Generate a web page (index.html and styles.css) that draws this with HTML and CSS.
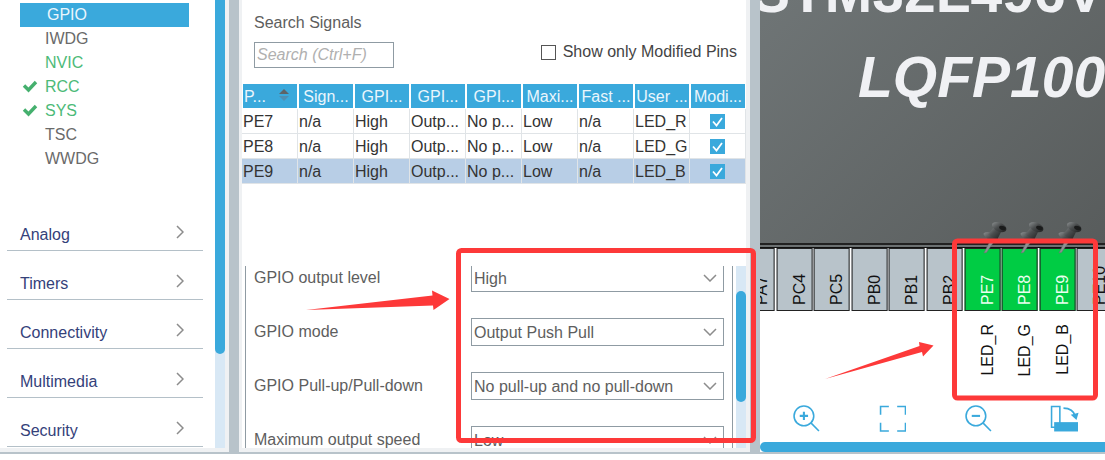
FILE: index.html
```
<!DOCTYPE html>
<html lang="en">
<head>
  <meta charset="UTF-8">
  <meta name="viewport" content="width=device-width, initial-scale=1.0">
  <title>Pinout &amp; Configuration</title>
  <link rel="stylesheet" href="styles.css">
</head>
<body>
  <!-- Shared icons -->
  <svg class="defs" width="0" height="0" aria-hidden="true">
    <linearGradient id="metal" x1="0" y1="0" x2="1" y2="1">
      <stop offset="0" stop-color="#8b8f90"/>
      <stop offset=".45" stop-color="#4a4d4e"/>
      <stop offset="1" stop-color="#1e2020"/>
    </linearGradient>
    <symbol id="check" viewBox="0 0 16 14">
      <path d="M2 6.5l4.5 4.5L14 3" fill="none" stroke="#45b06e" stroke-width="3.4"/>
    </symbol>
    <symbol id="chevron" viewBox="0 0 8 14">
      <path d="M1 1l6 6-6 6" fill="none" stroke="#8c8c8c" stroke-width="1.5"/>
    </symbol>
    <symbol id="pushpin" viewBox="0 0 24 34">
      <path d="M7 20L1 32l2.500-.5L10 22z" fill="#8d9192" stroke="#6a6e6f" stroke-width=".5"/>
      <path d="M1 12c3-2 7-1 10 1.500s6 5.500 5 8.500c-3 1-8-.5-11-3.500S-.5 13.500 1 12z" fill="url(#metal)"/>
      <path d="M5 13.500l6-7.500 7 5-4 8z" fill="url(#metal)"/>
      <path d="M10 2c3-2 8-.5 11 2s3 5 1 6.500c-3 1.500-7 .5-10-2S8 3.500 10 2z" fill="url(#metal)"/>
      <ellipse cx="19.500" cy="7" rx="3.500" ry="2" transform="rotate(20 19.500 7)" fill="#1a1b1b"/>
    </symbol>
  </svg>

  <div class="workspace">
    <nav class="panel sidebar">
      <div class="sidebar-content">
        <ul class="peripherals">
          <li><a class="peripheral selected" href="#">GPIO</a></li>
          <li><a class="peripheral" href="#">IWDG</a></li>
          <li><a class="peripheral active" href="#">NVIC</a></li>
          <li><a class="peripheral active" href="#"><svg class="check"><use href="#check"/></svg>RCC</a></li>
          <li><a class="peripheral active" href="#"><svg class="check"><use href="#check"/></svg>SYS</a></li>
          <li><a class="peripheral" href="#">TSC</a></li>
          <li><a class="peripheral" href="#">WWDG</a></li>
        </ul>
        <div class="categories">
          <button class="category">Analog <svg class="chevron"><use href="#chevron"/></svg></button>
          <button class="category">Timers <svg class="chevron"><use href="#chevron"/></svg></button>
          <button class="category">Connectivity <svg class="chevron"><use href="#chevron"/></svg></button>
          <button class="category">Multimedia <svg class="chevron"><use href="#chevron"/></svg></button>
          <button class="category">Security <svg class="chevron"><use href="#chevron"/></svg></button>
        </div>
      </div>
      <div class="scrollbar"><div class="thumb thumb-sidebar"></div></div>
    </nav>

    <main class="panel config">
      <div class="search">
        <div class="search-field">
          <label for="search">Search Signals</label>
          <input type="text" id="search" placeholder="Search (Ctrl+F)">
        </div>
        <label class="modified-only"><input type="checkbox" class="box"> Show only Modified Pins</label>
      </div>

      <table class="pins-table">
        <thead>
          <tr>
            <th class="sorted">P...
              <svg class="sort" viewBox="0 0 10 14"><path d="M0 6l5-5 5 5z" fill="#5d6468"/><path d="M0 8l5 5 5-5z" fill="#4f8fb3"/></svg>
            </th>
            <th>Sign...</th>
            <th>GPI...</th>
            <th>GPI...</th>
            <th>GPI...</th>
            <th>Maxi...</th>
            <th>Fast ...</th>
            <th>User ...</th>
            <th>Modi...</th>
          </tr>
        </thead>
        <tbody>
          <tr>
            <td>PE7</td><td>n/a</td><td>High</td><td>Outp...</td><td>No p...</td><td>Low</td><td>n/a</td><td>LED_R</td>
            <td class="mod"><input type="checkbox" class="box" aria-label="PE7 modified" checked></td>
          </tr>
          <tr>
            <td>PE8</td><td>n/a</td><td>High</td><td>Outp...</td><td>No p...</td><td>Low</td><td>n/a</td><td>LED_G</td>
            <td class="mod"><input type="checkbox" class="box" aria-label="PE8 modified" checked></td>
          </tr>
          <tr class="current">
            <td>PE9</td><td>n/a</td><td>High</td><td>Outp...</td><td>No p...</td><td>Low</td><td>n/a</td><td>LED_B</td>
            <td class="mod"><input type="checkbox" class="box" aria-label="PE9 modified" checked></td>
          </tr>
        </tbody>
      </table>

      <div class="settings">
        <form class="fields">
          <div class="field">
            <label for="level">GPIO output level</label>
            <select id="level"><option>High</option><option>Low</option></select>
          </div>
          <div class="field">
            <label for="mode">GPIO mode</label>
            <select id="mode"><option>Output Push Pull</option><option>Output Open Drain</option></select>
          </div>
          <div class="field">
            <label for="pull">GPIO Pull-up/Pull-down</label>
            <select id="pull"><option>No pull-up and no pull-down</option><option>Pull-up</option><option>Pull-down</option></select>
          </div>
          <div class="field">
            <label for="speed">Maximum output speed</label>
            <select id="speed"><option>Low</option><option>Medium</option><option>High</option></select>
          </div>
        </form>
        <div class="scrollbar"><div class="thumb thumb-settings"></div></div>
      </div>
    </main>

    <section class="pinout">
      <div class="chip">
        <div class="part">STM32L496V</div>
        <div class="package">LQFP100</div>
      </div>
      <div class="pins">
        <div class="pin"><span class="pad">PA7</span></div>
        <div class="pin"><span class="pad">PC4</span></div>
        <div class="pin"><span class="pad">PC5</span></div>
        <div class="pin"><span class="pad">PB0</span></div>
        <div class="pin"><span class="pad">PB1</span></div>
        <div class="pin"><span class="pad">PB2</span></div>
        <div class="pin"><span class="pad assigned">PE7</span><span class="signal">LED_R</span><svg class="pushpin"><use href="#pushpin"/></svg></div>
        <div class="pin"><span class="pad assigned">PE8</span><span class="signal">LED_G</span><svg class="pushpin"><use href="#pushpin"/></svg></div>
        <div class="pin"><span class="pad assigned">PE9</span><span class="signal">LED_B</span><svg class="pushpin"><use href="#pushpin"/></svg></div>
        <div class="pin"><span class="pad">PE10</span></div>
      </div>
      <div class="toolbar">
        <button aria-label="Zoom in">
          <svg viewBox="0 0 26 26"><circle cx="10.500" cy="10.500" r="9.500"/><path d="M17.500 17.500l7.500 7.500"/><path d="M6.500 10.500h8M10.500 6.500v8" stroke-width="2"/></svg>
        </button>
        <button aria-label="Best fit">
          <svg viewBox="0 0 26 26"><path d="M1.500 9.500v-8h8M17.500 1.500h8v8M25.500 17v8h-8M9.500 25h-8v-8" /></svg>
        </button>
        <button aria-label="Zoom out">
          <svg viewBox="0 0 26 26"><circle cx="10.500" cy="10.500" r="9.500"/><path d="M17.500 17.500l7.500 7.500"/><path d="M6.500 10.500h8" stroke-width="2"/></svg>
        </button>
        <button aria-label="Rotate">
          <svg viewBox="0 0 28 26"><path d="M1.500 1.500h8v20h-8z"/><path d="M4 16.500h23v9H4z" fill="#3aa9dc" stroke="none"/><path d="M13 3c6 0 10 3 11.500 8" /><path d="M20 9.500l5.500 5 2-7z" fill="#3aa9dc" stroke="none"/></svg>
        </button>
      </div>
      <div class="hscroll"></div>
    </section>

    <!-- Red marks over the settings and the LED pins -->
    <svg class="marks" width="1105" height="460" viewBox="0 0 1105 460" aria-hidden="true">
      <rect x="458.500" y="250.500" width="295" height="190" rx="3"/>
      <rect x="954.500" y="241" width="141" height="157" rx="3"/>
      <path d="M306 310l126.500-14.500-.5-5 17.500 8.500-16 11-.5-4.500z"/>
      <path d="M825 379l94.500-33-.5-4 14.500 3.500-10.500 11-1-4.500z"/>
    </svg>
  </div>
</body>
</html>
```
FILE: styles.css
```
* {
  box-sizing: border-box;
}

body {
  margin: 0;
  background: #fff;
  color: #5e5e5e;
  font-family: "Liberation Sans", Arial, sans-serif;
  font-size: 16px;
}

input, select, button {
  font: inherit;
  color: inherit;
}

button {
  background: none;
  border: none;
  padding: 0;
}

.defs {
  position: absolute;
}

.workspace {
  position: relative;
  display: grid;
  grid-template-columns: 229px 511px minmax(0, 1fr);
  column-gap: 10px;
  height: calc(100vh - 6px);
  background: #b8c3ca;
  padding-bottom: 2px;
  overflow: hidden;
}

.panel {
  background: #fff;
  border: 4px solid #eff1f3;
  border-top: none;
  min-height: 0;
  overflow: hidden;
}

.scrollbar {
  width: 10px;
  background: #d8e8f5;
}

.thumb {
  background: #3aa9dc;
  border-radius: 5px;
}

/* Sidebar */
.sidebar {
  display: flex;
  border-left: none;
}

.sidebar-content {
  flex: 1;
  padding: 3px 12px 0 7px;
}

.thumb-sidebar {
  height: 79%;
  border-radius: 0 0 5px 5px;
}

.peripherals {
  list-style: none;
  margin: 0;
  padding: 0 14px 0 13px;
}

.peripheral {
  position: relative;
  display: block;
  padding-left: 25px;
  line-height: 24px;
  color: #6a6a6a;
  text-decoration: none;
}

.peripheral.active {
  color: #4cba78;
}

.peripheral.selected {
  background: #3aa9dc;
  color: #eaf6fc;
  padding-left: 27px;
}

.check {
  position: absolute;
  left: 2px;
  top: 4px;
  width: 16px;
  height: 14px;
}

.categories {
  padding-top: 31px;
}

.category {
  display: flex;
  justify-content: space-between;
  align-items: flex-end;
  width: 100%;
  height: 49px;
  padding: 0 19px 6px 13px;
  border-bottom: 1px solid #b4c0c8;
  color: #34417a;
}

.chevron {
  width: 8px;
  height: 14px;
  margin-bottom: 5px;
}

/* Configuration */
.config {
  display: flex;
  flex-direction: column;
  border-left-width: 3px;
}

.search {
  display: flex;
  justify-content: space-between;
  align-items: flex-end;
  padding: 14px 8px 0 12px;
}

.search-field {
  display: flex;
  flex-direction: column;
  gap: 10px;
}

.search-field input {
  width: 140px;
  height: 26px;
  padding: 0 2px;
  border: 1px solid #8f9ba3;
}

.search-field input::placeholder {
  color: #b0b0b0;
  font-style: italic;
}

.modified-only {
  display: flex;
  align-items: center;
  gap: 7px;
  padding: 0 1px 7px 0;
  color: #444;
}

.box {
  appearance: none;
  flex: none;
  width: 15px;
  height: 15px;
  margin: 0;
  border: 1px solid #555;
  background: #fff;
}

.box:checked {
  border: none;
  background: #3aa9dc url("data:image/svg+xml,%3Csvg xmlns='http://www.w3.org/2000/svg' viewBox='0 0 15 15'%3E%3Cpath d='M3 7.5l3.500 4L12 4' fill='none' stroke='white' stroke-width='1.800'/%3E%3C/svg%3E");
}

.pins-table {
  table-layout: fixed;
  width: 100%;
  margin-top: 16px;
  border-collapse: separate;
  border-spacing: 0;
  color: #333;
}

.pins-table th {
  height: 25px;
  padding: 1px 0 0;
  border: 1px solid #fff;
  border-width: 0 1px 1px;
  background: #3aa9dc;
  color: #eaf6fc;
  font-weight: normal;
  white-space: nowrap;
}

.pins-table .sorted {
  text-align: left;
  padding-left: 1px;
}

.sort {
  width: 10px;
  height: 14px;
  margin-left: 9px;
}

.pins-table td {
  height: 25px;
  padding: 2px 0 0 1px;
  border-right: 1px solid #e0e4e7;
  border-bottom: 1px solid #e0e4e7;
  white-space: nowrap;
}

.pins-table .mod {
  padding: 2px 0 0;
  text-align: center;
  line-height: 15px;
}

.current {
  background: #b8cee6;
}

.settings {
  display: flex;
  flex: 1;
  min-height: 0;
  margin-top: 82px;
  overflow: hidden;
}

.fields {
  display: flex;
  flex-direction: column;
  flex: 1;
  gap: 26px;
  margin: -2px 3px 0;
  padding: 0 8px;
  border: 1px solid #8f9ba3;
  border-width: 0 1px;
}

.field {
  display: flex;
  justify-content: space-between;
  align-items: center;
}

select {
  appearance: none;
  width: 253px;
  height: 28px;
  padding: 0 2px;
  border: 1px solid #8f9ba3;
  border-radius: 0;
  background: #fff url("data:image/svg+xml,%3Csvg xmlns='http://www.w3.org/2000/svg' width='14' height='8' viewBox='0 0 14 8'%3E%3Cpath d='M1 1l6 6 6-6' fill='none' stroke='%238c8c8c' stroke-width='1.500'/%3E%3C/svg%3E") no-repeat right 6px center;
}

.thumb-settings {
  height: 111px;
  margin-top: 25px;
}

/* Pinout view */
.pinout {
  display: flex;
  flex-direction: column;
  background: #fff;
  overflow: hidden;
}

.chip {
  height: 248px;
  flex: none;
  overflow: hidden;
  border-bottom: 1px solid #111;
  box-shadow: inset 0 -2px #6c7172, inset 0 -4px #222;
  background: linear-gradient(135deg, #6f7576, #585c5c);
  color: #f0f1f4;
  font-size: 57px;
  font-weight: bold;
  line-height: 57px;
  white-space: nowrap;
}

.part {
  margin: -36px 0 28px -8px;
}

.package {
  padding-left: 98px;
  font-style: italic;
}

.pins {
  display: grid;
  grid-template-columns: repeat(10, minmax(0, 1fr));
  gap: 2px;
  margin: 0 -8px 0 -21px;
  color: #111;
}

.pin {
  position: relative;
  display: flex;
  flex-direction: column;
  align-items: center;
  gap: 13px;
}

.pad, .signal {
  writing-mode: vertical-rl;
  transform: rotate(180deg);
}

.pad {
  width: 100%;
  height: 63px;
  padding: 5px 9px 0 0;
  border: 1px solid #222;
  background: #b8c3ca;
  line-height: 26px;
}

.pad.assigned {
  background: #00cc44;
  color: #eafff0;
}

.signal {
  margin-left: 11px;
}

.pushpin {
  position: absolute;
  left: 18px;
  top: -27px;
  width: 24px;
  height: 34px;
}

.toolbar {
  display: grid;
  grid-template-columns: repeat(4, 1fr);
  justify-items: center;
  margin: auto -3px 10px 3px;
}

.toolbar svg {
  display: block;
  height: 27px;
  fill: none;
  stroke: #3aa9dc;
  stroke-width: 1.5;
}

.hscroll {
  height: 10px;
  flex: none;
  background: #3aa9dc;
  border-radius: 5px 0 0 5px;
}

.marks {
  position: absolute;
  left: 0;
  top: 0;
  fill: #fd3939;
}

.marks rect {
  fill: none;
  stroke: #fd3939;
  stroke-width: 5;
}
```
